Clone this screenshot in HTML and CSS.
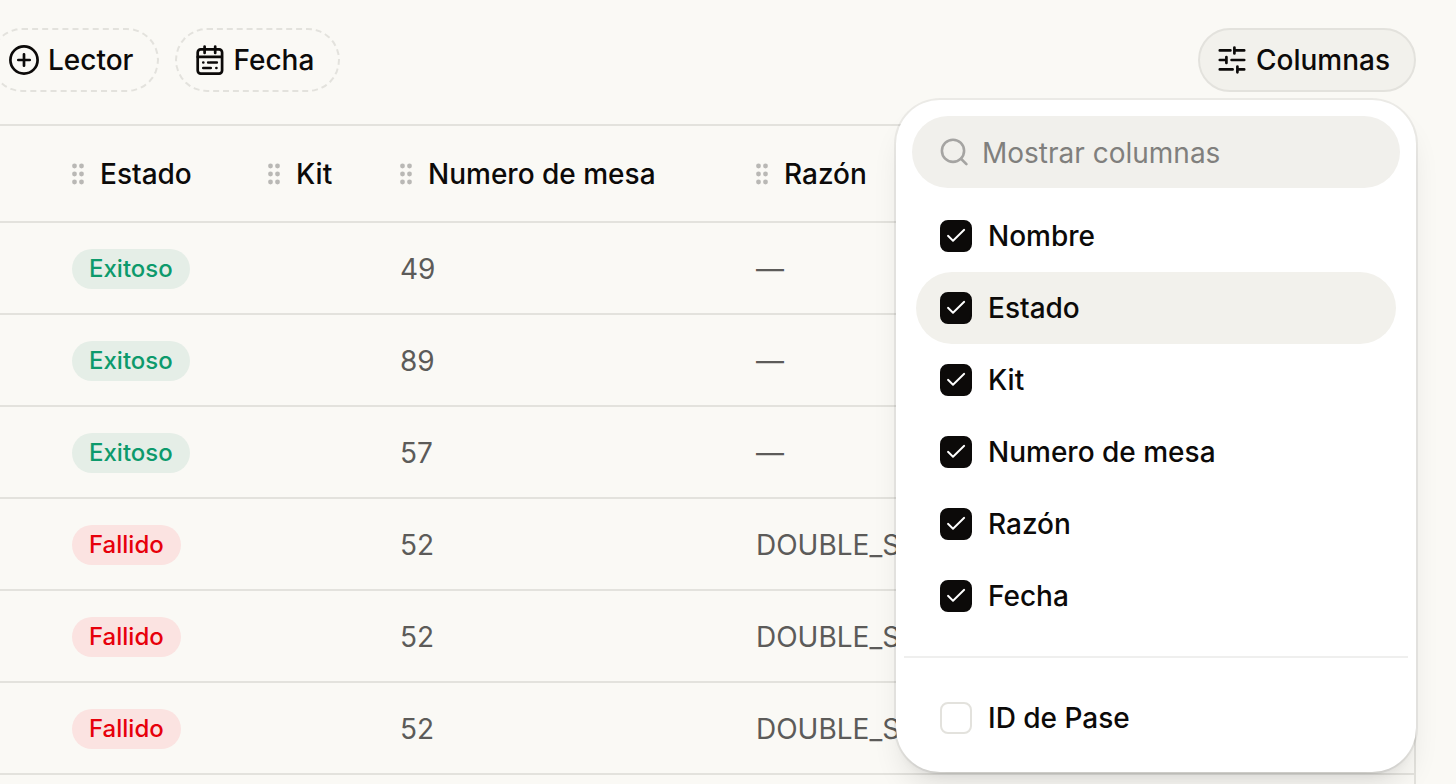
FILE: index.html
```html
<!DOCTYPE html>
<html lang="es">
<head>
<meta charset="utf-8">
<meta name="viewport" content="width=device-width, initial-scale=1">
<title>Columnas</title>
<link rel="stylesheet" href="styles.css">
</head>
<body>
<svg class="sprite" aria-hidden="true">
  <symbol id="grip" viewBox="0 0 12 24">
    <g fill="currentColor"><circle cx="2.5" cy="4" r="2.4"/><circle cx="9.5" cy="4" r="2.4"/><circle cx="2.5" cy="12" r="2.4"/><circle cx="9.5" cy="12" r="2.4"/><circle cx="2.5" cy="20" r="2.4"/><circle cx="9.5" cy="20" r="2.4"/></g>
  </symbol>
  <symbol id="tick" viewBox="0 0 32 32">
    <path d="M8 15.8 13 20.7 24.2 9.8" fill="none" stroke="currentColor" stroke-width="1.9" stroke-linecap="round" stroke-linejoin="round"/>
  </symbol>
</svg>
<main class="page">
  <div class="toolbar">
    <div class="filters">
      <button class="button button-dashed" type="button">
        <svg class="icon" viewBox="0 0 32 32" aria-hidden="true"><circle cx="16" cy="16" r="13.6"/><path d="M16 10.3v11.4M10.3 16h11.4"/></svg>
        Lector
      </button>
      <button class="button button-dashed" type="button">
        <svg class="icon" viewBox="0 0 32 32" aria-hidden="true"><rect x="4.7" y="5.4" width="24.4" height="24.2" rx="3"/><path d="M4.8 12.9h24M11.6 2.6v6.4M22.2 2.6v6.4M10.3 18.5h.01M15.2 18.5h.01M17 18.5h6.8M10.3 24h7.4M23.4 24h.01"/></svg>
        Fecha
      </button>
    </div>
    <div class="menu-anchor">
      <button class="button button-active" type="button" aria-expanded="true">
        <svg class="icon" viewBox="0 0 32 32" aria-hidden="true"><path d="M3.8 6.4h10.6M18.4 3.6v5.8M18.4 6.4h9.8M3.8 16h6.4M10.4 13.1v5.8M15.6 16h12.6M3.8 25.4h12.8M21.4 22.5v5.8M21.4 25.4h6.8"/></svg>
        Columnas
      </button>
      <div class="popover">
        <label class="search">
          <svg class="search-icon" viewBox="0 0 28 28" aria-hidden="true"><circle cx="13" cy="12.8" r="11.1"/><path d="m21 20.8 5.4 5.3"/></svg>
          <input class="search-input" type="text" placeholder="Mostrar columnas" aria-label="Mostrar columnas">
        </label>
        <div class="options">
          <label class="option"><span class="check"><input type="checkbox" checked><svg aria-hidden="true"><use href="#tick"/></svg></span>Nombre</label>
          <label class="option option-current"><span class="check"><input type="checkbox" checked><svg aria-hidden="true"><use href="#tick"/></svg></span>Estado</label>
          <label class="option"><span class="check"><input type="checkbox" checked><svg aria-hidden="true"><use href="#tick"/></svg></span>Kit</label>
          <label class="option"><span class="check"><input type="checkbox" checked><svg aria-hidden="true"><use href="#tick"/></svg></span>Numero de mesa</label>
          <label class="option"><span class="check"><input type="checkbox" checked><svg aria-hidden="true"><use href="#tick"/></svg></span>Razón</label>
          <label class="option"><span class="check"><input type="checkbox" checked><svg aria-hidden="true"><use href="#tick"/></svg></span>Fecha</label>
        </div>
        <hr class="divider">
        <div class="options options-hidden">
          <label class="option"><span class="check"><input type="checkbox"><svg aria-hidden="true"><use href="#tick"/></svg></span>ID de Pase</label>
        </div>
      </div>
    </div>
  </div>
  <div class="table-frame">
    <table class="table">
      <colgroup><col class="col-lead"><col class="col-state"><col class="col-kit"><col class="col-mesa"><col></colgroup>
      <thead>
        <tr>
          <td></td>
          <th scope="col"><span class="heading"><svg class="grip" aria-hidden="true"><use href="#grip"/></svg>Estado</span></th>
          <th scope="col"><span class="heading"><svg class="grip" aria-hidden="true"><use href="#grip"/></svg>Kit</span></th>
          <th scope="col"><span class="heading"><svg class="grip" aria-hidden="true"><use href="#grip"/></svg>Numero de mesa</span></th>
          <th scope="col"><span class="heading"><svg class="grip" aria-hidden="true"><use href="#grip"/></svg>Razón</span></th>
        </tr>
      </thead>
      <tbody>
        <tr><td></td><td><span class="badge badge-ok">Exitoso</span></td><td></td><td>49</td><td>—</td></tr>
        <tr><td></td><td><span class="badge badge-ok">Exitoso</span></td><td></td><td>89</td><td>—</td></tr>
        <tr><td></td><td><span class="badge badge-ok">Exitoso</span></td><td></td><td>57</td><td>—</td></tr>
        <tr><td></td><td><span class="badge badge-fail">Fallido</span></td><td></td><td>52</td><td>DOUBLE_S</td></tr>
        <tr><td></td><td><span class="badge badge-fail">Fallido</span></td><td></td><td>52</td><td>DOUBLE_S</td></tr>
        <tr><td></td><td><span class="badge badge-fail">Fallido</span></td><td></td><td>52</td><td>DOUBLE_S</td></tr>
      </tbody>
    </table>
  </div>
</main>
</body>
</html>
```

FILE: styles.css
```css
:root {
  --page: #faf9f5;
  --muted: #f2f1ec;
  --line: #e3e2dd;
  --ink: #0c0a09;
  --soft-ink: #5c5b59;
}

* {
  box-sizing: border-box;
}

body {
  margin: 0;
  background: var(--page);
  color: var(--ink);
  font-family: Inter, "Liberation Sans", sans-serif;
  font-size: 28px;
  line-height: 40px;
}

.sprite {
  display: none;
}

.page {
  display: flex;
  flex-direction: column;
  height: 100vh;
  overflow: hidden;
}

.toolbar {
  display: flex;
  justify-content: space-between;
  padding: 28px 40px 32px 0;
}

.filters {
  display: flex;
  gap: 16px;
  margin-left: -10px;
}

.button {
  display: flex;
  align-items: center;
  gap: 8px;
  height: 64px;
  padding: 0 24px 0 16px;
  border: 2px solid var(--line);
  border-radius: 32px;
  background: transparent;
  color: inherit;
  font: inherit;
  font-weight: 500;
  white-space: nowrap;
}

.button-dashed {
  border-style: dashed;
}

.button-active {
  background: var(--muted);
}

.icon {
  width: 32px;
  height: 32px;
  fill: none;
  stroke: currentColor;
  stroke-width: 2.7;
  stroke-linecap: round;
  stroke-linejoin: round;
}

.menu-anchor {
  position: relative;
}

.popover {
  position: absolute;
  z-index: 1;
  top: calc(100% + 8px);
  right: 0;
  width: 520px;
  padding-top: 16px;
  border-radius: 44px;
  background: #fff;
  box-shadow:
    0 0 0 2px rgba(0, 0, 0, 0.06),
    0 20px 30px -6px rgba(0, 0, 0, 0.1),
    0 8px 12px -8px rgba(0, 0, 0, 0.1);
}

.search {
  display: flex;
  align-items: center;
  gap: 14px;
  height: 72px;
  margin: 0 16px;
  padding: 0 28px;
  border-radius: 36px;
  background: #f1f0ec;
}

.search-icon {
  flex: none;
  width: 28px;
  height: 28px;
  fill: none;
  stroke: #a5a4a2;
  stroke-width: 2.6;
  stroke-linecap: round;
}

.search-input {
  flex: 1;
  min-width: 0;
  padding: 2px 0 0;
  border: 0;
  outline: 0;
  background: transparent;
  color: inherit;
  font: inherit;
}

.search-input::placeholder {
  color: #807f7d;
}

.options {
  padding: 12px 20px 24px;
}

.options-hidden {
  padding: 24px 20px 18px;
}

.option {
  display: flex;
  align-items: center;
  gap: 16px;
  height: 72px;
  padding: 0 24px;
  border-radius: 36px;
  font-weight: 500;
}

.option-current {
  background: var(--muted);
}

.check {
  display: grid;
  width: 32px;
  height: 32px;
  color: #fff;
}

.check > * {
  grid-area: 1 / 1;
  width: 32px;
  height: 32px;
  margin: 0;
}

.check svg {
  pointer-events: none;
  visibility: hidden;
}

.check input {
  appearance: none;
  border: 2px solid var(--line);
  border-radius: 8px;
}

.check input:checked {
  border-color: var(--ink);
  background: var(--ink);
}

.check input:checked + svg {
  visibility: visible;
}

.divider {
  height: 2px;
  margin: 0 8px;
  border: 0;
  background: #efefee;
}

.table-frame {
  flex: 1;
  margin-right: 40px;
  border-top: 2px solid var(--line);
  border-right: 2px solid var(--line);
  border-top-right-radius: 28px;
}

.table {
  width: 100%;
  border-collapse: separate;
  border-spacing: 0;
  table-layout: fixed;
}

.col-lead {
  width: 40px;
}

.col-state {
  width: 196px;
}

.col-kit {
  width: 132px;
}

.col-mesa {
  width: 356px;
}

.table th,
.table td {
  height: 92px;
  padding: 0 0 0 32px;
  border-bottom: 2px solid var(--line);
  color: var(--soft-ink);
  text-align: left;
  vertical-align: middle;
  white-space: nowrap;
}

.table thead th,
.table thead td {
  height: 97px;
  color: var(--ink);
  font-weight: 500;
}

.table tbody td {
  padding-top: 1px;
}

.heading {
  display: flex;
  align-items: center;
  gap: 16px;
}

.grip {
  width: 12px;
  height: 24px;
  color: #b9b8b5;
}

.badge {
  display: flex;
  align-items: center;
  width: fit-content;
  height: 40px;
  padding: 0 17px;
  border-radius: 20px;
  font-size: 24px;
  font-weight: 500;
}

.badge-ok {
  background: #e5eee7;
  color: #0d9a6c;
}

.badge-fail {
  background: #fbe3e1;
  color: #e7000b;
}
```
